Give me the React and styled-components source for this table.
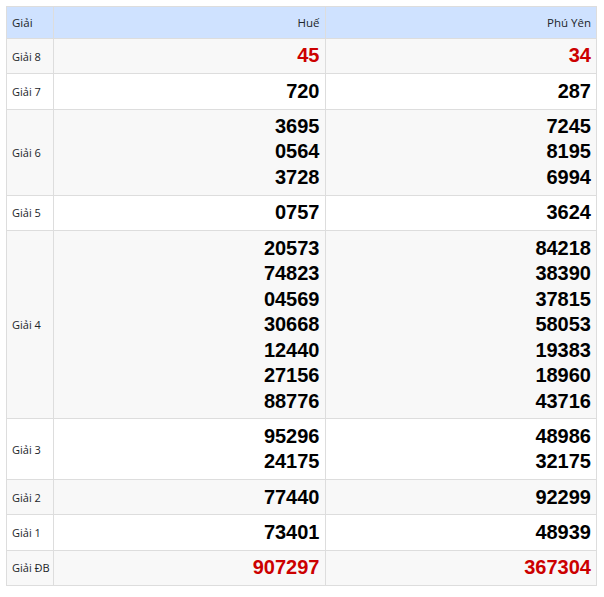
import styled, { createGlobalStyle } from "styled-components";

const GlobalStyle = createGlobalStyle`
  body {
    margin: 0;
    background: #fff;
    font-family: "Open Sans", "Noto Sans", sans-serif;
  }
`;

const Wrap = styled.div`
  padding: 6px 7px 6px 6px;
`;

const Table = styled.table`
  width: 591px;
  border-collapse: collapse;
  table-layout: fixed;
`;

const HeadCell = styled.th`
  background: #cfe2ff;
  border: 1px solid #dddddd;
  height: 31px;
  padding: 0 5px;
  font-size: 11.5px;
  font-weight: 400;
  color: #212529;
  text-align: ${({ align }) => align || "right"};
  width: ${({ w }) => w || "auto"};
`;

const Row = styled.tr`
  background: ${({ striped }) => (striped ? "#f8f8f8" : "#ffffff")};
`;

const Label = styled.td`
  border: 1px solid #dddddd;
  padding: 0 5px;
  font-size: 11px;
  color: #212529;
  white-space: nowrap;
  vertical-align: middle;
`;

const NumCell = styled.td`
  border: 1px solid #dddddd;
  padding: 4.4px 5px;
  text-align: right;
  vertical-align: middle;
`;

const Num = styled.div`
  font-family: "Liberation Sans", Arial, sans-serif;
  font-weight: 700;
  font-size: 20px;
  line-height: 25.5px;
  color: ${({ red }) => (red ? "#cc0000" : "#000000")};
`;

const rows = [
  { name: "Giải 8", hue: ["45"], py: ["34"], red: true },
  { name: "Giải 7", hue: ["720"], py: ["287"] },
  { name: "Giải 6", hue: ["3695", "0564", "3728"], py: ["7245", "8195", "6994"] },
  { name: "Giải 5", hue: ["0757"], py: ["3624"] },
  {
    name: "Giải 4",
    hue: ["20573", "74823", "04569", "30668", "12440", "27156", "88776"],
    py: ["84218", "38390", "37815", "58053", "19383", "18960", "43716"],
  },
  { name: "Giải 3", hue: ["95296", "24175"], py: ["48986", "32175"] },
  { name: "Giải 2", hue: ["77440"], py: ["92299"] },
  { name: "Giải 1", hue: ["73401"], py: ["48939"] },
  { name: "Giải ĐB", hue: ["907297"], py: ["367304"], red: true },
];

const App = () => (
  <Wrap>
    <GlobalStyle />
    <Table>
      <thead>
        <tr>
          <HeadCell align="left" w="36px">Giải</HeadCell>
          <HeadCell>Huế</HeadCell>
          <HeadCell>Phú Yên</HeadCell>
        </tr>
      </thead>
      <tbody>
        {rows.map((r, i) => (
          <Row key={r.name} striped={i % 2 === 0}>
            <Label>{r.name}</Label>
            <NumCell>
              {r.hue.map((n, j) => (
                <Num key={`h-${j}`} red={r.red}>{n}</Num>
              ))}
            </NumCell>
            <NumCell>
              {r.py.map((n, j) => (
                <Num key={`p-${j}`} red={r.red}>{n}</Num>
              ))}
            </NumCell>
          </Row>
        ))}
      </tbody>
    </Table>
  </Wrap>
);

export default App;
